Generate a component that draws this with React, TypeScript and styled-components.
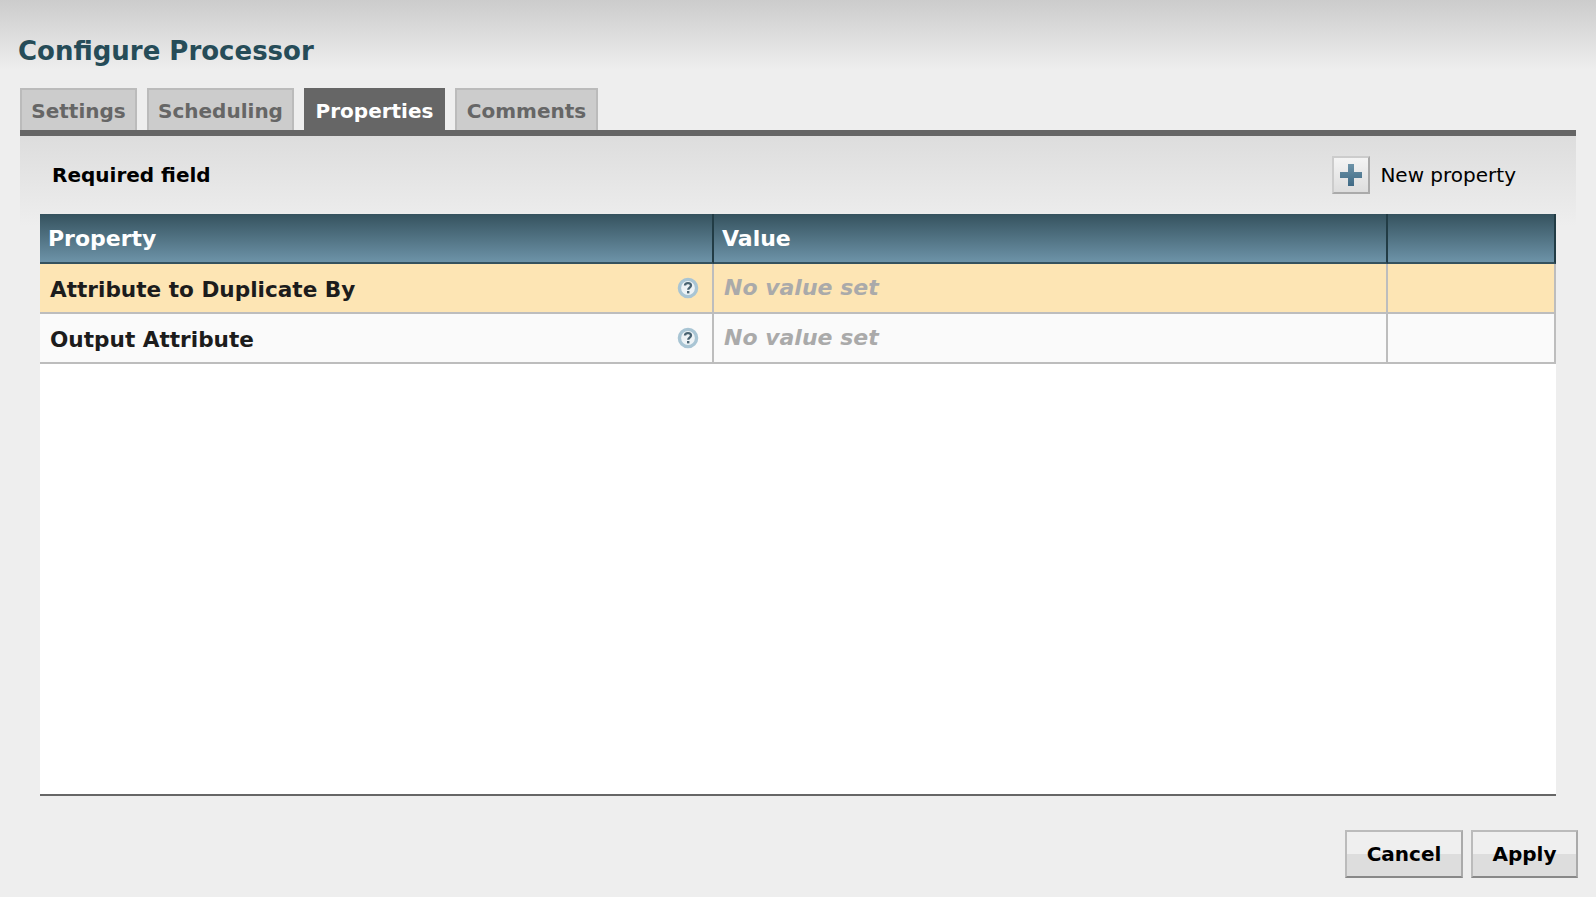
import React from 'react';
import styled, { createGlobalStyle } from 'styled-components';

const GlobalStyle = createGlobalStyle`
  html, body {
    margin: 0;
    padding: 0;
    height: 100%;
    background: #eeeeee;
    font-family: "DejaVu Sans", Verdana, sans-serif;
  }
`;

const Dialog = styled.div`
  box-sizing: border-box;
  width: 1596px;
  height: 897px;
  padding: 0 20px;
  display: flex;
  flex-direction: column;
  background: linear-gradient(to bottom, #cccccc 0, #eeeeee 70px);
  overflow: hidden;
`;

const Title = styled.h1`
  margin: 0 0 0 -2px;
  padding-top: 35px;
  height: 53px;
  line-height: 32px;
  font-size: 26px;
  font-weight: bold;
  color: #264c58;
`;

const Tabs = styled.div`
  display: flex;
  gap: 10px;
  height: 42px;
`;

const Tab = styled.div<{ $active?: boolean; $width: number }>`
  box-sizing: border-box;
  width: ${(props) => props.$width}px;
  padding-top: 1px;
  display: flex;
  align-items: center;
  justify-content: center;
  font-size: 20px;
  font-weight: bold;
  border: 2px solid ${(props) => (props.$active ? '#666666' : '#bbbbbb')};
  border-bottom: none;
  background: ${(props) => (props.$active ? '#666666' : '#cccccc')};
  color: ${(props) => (props.$active ? '#ffffff' : '#666666')};
`;

const Panel = styled.div`
  flex: 1;
  display: flex;
  flex-direction: column;
  border-top: 6px solid #666666;
  padding: 0 20px;
  background: linear-gradient(to bottom, #dddddd 0, #eeeeee 90px);
`;

const Toolbar = styled.div`
  height: 78px;
  display: flex;
  align-items: center;
  justify-content: space-between;
  padding: 0 40px 0 12px;
`;

const RequiredLabel = styled.div`
  font-size: 20px;
  font-weight: bold;
  color: #000000;
`;

const AddProperty = styled.div`
  display: flex;
  align-items: center;
  gap: 10px;
  font-size: 20px;
  color: #000000;
`;

const AddButton = styled.div`
  box-sizing: border-box;
  width: 38px;
  height: 38px;
  display: flex;
  align-items: center;
  justify-content: center;
  border: 2px solid #aaaaaa;
  border-top-color: #cccccc;
  border-left-color: #cccccc;
  background: linear-gradient(to bottom, #f4f4f4, #dddddd);
`;

const Grid = styled.div`
  box-sizing: border-box;
  height: 582px;
  background: #ffffff;
  border-bottom: 2px solid #666666;
`;

const Row = styled.div`
  display: grid;
  grid-template-columns: 674px 674px 1fr;
`;

const HeadCell = styled.div`
  box-sizing: border-box;
  height: 50px;
  padding: 0 8px;
  display: flex;
  align-items: center;
  font-size: 22px;
  font-weight: bold;
  color: #ffffff;
  background: linear-gradient(to bottom, #35525e 0, #6d93a8 100%);
  border-right: 2px solid #223c45;
  border-bottom: 2px solid #35525e;
`;

const Cell = styled.div<{ $required?: boolean }>`
  box-sizing: border-box;
  height: 50px;
  padding: 0 13px 0 10px;
  display: flex;
  align-items: center;
  justify-content: space-between;
  background: ${(props) => (props.$required ? '#fde5b4' : '#fafafa')};
  border-right: 2px solid #bdbdbd;
  border-bottom: 2px solid #bdbdbd;
`;

const PropertyName = styled.span`
  padding-top: 2px;
  font-size: 21.6px;
  font-weight: bold;
  color: #1c1c1c;
`;

const EmptyValue = styled.span`
  font-size: 22px;
  font-weight: bold;
  font-style: italic;
  color: #aaaaaa;
  margin-top: -2px;
`;

const Footer = styled.div`
  display: flex;
  justify-content: flex-end;
  gap: 8px;
  margin: 34px -22px 0 0;
`;

const FooterButton = styled.button<{ $width: number }>`
  box-sizing: border-box;
  width: ${(props) => props.$width}px;
  height: 48px;
  padding: 0;
  font-family: inherit;
  font-size: 20px;
  font-weight: bold;
  color: #000000;
  border: 2px solid #bbbbbb;
  border-bottom-color: #888888;
  border-right-color: #aaaaaa;
  background: linear-gradient(to bottom, #efefef 50%, #dddddd 50%);
`;

const IconSvg = styled.svg`
  display: block;
  flex: none;
`;

const HelpIcon = () => (
  <IconSvg width="22" height="22" viewBox="0 0 22 22">
    <defs>
      <filter id="help-soft">
        <feGaussianBlur stdDeviation="0.35" />
      </filter>
    </defs>
    <g filter="url(#help-soft)">
      <circle cx="11" cy="11" r="8.6" fill="#eef3f6" stroke="#a9c5d4" strokeWidth="3.4" />
      <path
        d="M8 8.6c0-1.7 1.3-2.4 3-2.4s3 .9 3 2.4c0 2-2.8 2-2.8 4.2"
        fill="none"
        stroke="#4a6472"
        strokeWidth="2.3"
      />
      <rect x="10" y="14" width="2.4" height="2.4" fill="#4a6472" />
    </g>
  </IconSvg>
);

const PlusIcon = () => (
  <IconSvg width="26" height="26" viewBox="0 0 26 26">
    <defs>
      <linearGradient id="plus-fill" x1="0" y1="0" x2="0" y2="1">
        <stop offset="0" stopColor="#6d93a8" />
        <stop offset="1" stopColor="#3f6a85" />
      </linearGradient>
      <filter id="plus-soft">
        <feGaussianBlur stdDeviation="0.6" />
      </filter>
    </defs>
    <path
      d="M10 2h6v8h8v6h-8v8h-6v-8H2v-6h8z"
      fill="url(#plus-fill)"
      filter="url(#plus-soft)"
    />
  </IconSvg>
);

const tabs = [
  { label: 'Settings', width: 117 },
  { label: 'Scheduling', width: 147 },
  { label: 'Properties', width: 141, active: true },
  { label: 'Comments', width: 143 },
];

const properties = [
  { name: 'Attribute to Duplicate By', required: true },
  { name: 'Output Attribute', required: false },
];

const App: React.FC = () => {
  return (
    <Dialog>
      <GlobalStyle />
      <Title>Configure Processor</Title>
      <Tabs>
        {tabs.map((tab) => (
          <Tab key={tab.label} $active={tab.active} $width={tab.width}>
            {tab.label}
          </Tab>
        ))}
      </Tabs>
      <Panel>
        <Toolbar>
          <RequiredLabel>Required field</RequiredLabel>
          <AddProperty>
            <AddButton>
              <PlusIcon />
            </AddButton>
            New property
          </AddProperty>
        </Toolbar>
        <Grid>
          <Row>
            <HeadCell>Property</HeadCell>
            <HeadCell>Value</HeadCell>
            <HeadCell />
          </Row>
          {properties.map((property) => (
            <Row key={property.name}>
              <Cell $required={property.required}>
                <PropertyName>{property.name}</PropertyName>
                <HelpIcon />
              </Cell>
              <Cell $required={property.required}>
                <EmptyValue>No value set</EmptyValue>
              </Cell>
              <Cell $required={property.required} />
            </Row>
          ))}
        </Grid>
        <Footer>
          <FooterButton $width={118}>Cancel</FooterButton>
          <FooterButton $width={107}>Apply</FooterButton>
        </Footer>
      </Panel>
    </Dialog>
  );
};

export default App;
